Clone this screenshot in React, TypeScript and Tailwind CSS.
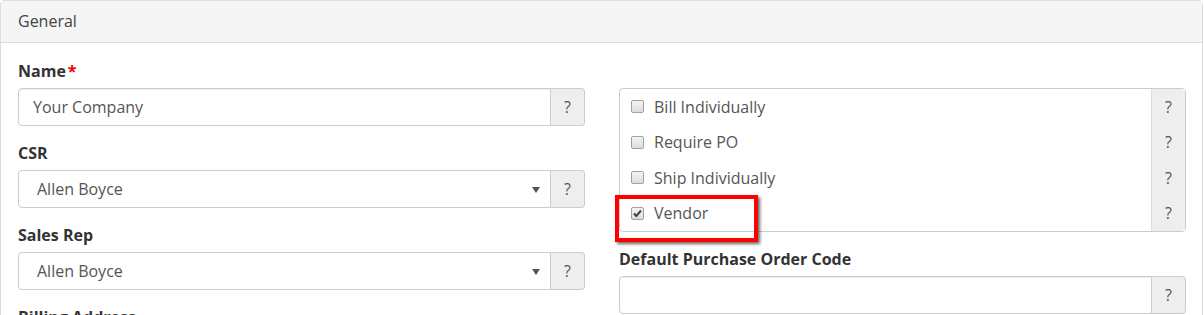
import { ReactNode } from "react";

const FONT = "font-['Open_Sans','Liberation_Sans',sans-serif]";

const HelpAddon = ({ className = "" }: { className?: string }) => (
  <span
    className={`flex w-[34px] shrink-0 items-center justify-center border border-l-0 border-[#ccc] bg-[#eee] text-[16px] text-[#555] ${className}`}
  >
    ?
  </span>
);

const Label = ({ children, required }: { children: ReactNode; required?: boolean }) => (
  <label className="mb-[6px] block pt-[2px] text-[16px] font-bold leading-[22px] text-[#333]">
    {children}
    {required && <span className="ml-[2px] text-[#e00]">*</span>}
  </label>
);

const TextField = ({ value = "" }: { value?: string }) => (
  <div className="flex h-[38px]">
    <div className="flex flex-1 items-center rounded-l-[4px] border border-[#ccc] px-[14px] text-[16px] text-[#555] shadow-[inset_0_1px_1px_rgba(0,0,0,0.075)]">
      {value}
    </div>
    <HelpAddon className="rounded-r-[4px]" />
  </div>
);

const SelectField = ({ value }: { value: string }) => (
  <div className="flex h-[38px]">
    <div className="flex flex-1 items-center justify-between rounded-l-[4px] border border-[#ccc] pl-[18px] pr-[10px] text-[16px] text-[#555]">
      <span>{value}</span>
      <svg width="8" height="6" viewBox="0 0 8 6" className="mt-[1px]">
        <path d="M0 0h8L4 6z" fill="#555" />
      </svg>
    </div>
    <HelpAddon className="rounded-r-[4px]" />
  </div>
);

const CheckBox = ({ checked }: { checked?: boolean }) => (
  <span className="relative inline-block h-[13px] w-[13px] rounded-[2px] border border-[#a0a0a0] bg-gradient-to-b from-[#f4f4f4] to-[#dcdcdc]">
    {checked && (
      <svg width="11" height="11" viewBox="0 0 11 11" className="absolute left-0 top-0">
        <path d="M2 5.5l2.3 2.5L9 2.5" fill="none" stroke="#444" strokeWidth="2" />
      </svg>
    )}
  </span>
);

const options = [
  { label: "Bill Individually", checked: false },
  { label: "Require PO", checked: false },
  { label: "Ship Individually", checked: false },
  { label: "Vendor", checked: true },
];

export default function App() {
  return (
    <div className={`h-[315px] w-[1204px] overflow-hidden bg-white ${FONT}`}>
      <div className="mr-[1px] h-[340px] rounded-t-[4px] border border-[#ddd]">
        <div className="flex h-[42px] items-center border-b border-[#ddd] bg-[#f5f5f5] px-[17px] pb-[1px] text-[16px] text-[#444]">
          General
        </div>
        <div className="grid grid-cols-2 gap-[34px] pl-[17px] pr-[16px] pt-[15px]">
          <div className="flex flex-col gap-[14px]">
            <div>
              <Label required>Name</Label>
              <TextField value="Your Company" />
            </div>
            <div>
              <Label>CSR</Label>
              <SelectField value="Allen Boyce" />
            </div>
            <div>
              <Label>Sales Rep</Label>
              <SelectField value="Allen Boyce" />
            </div>
            <div>
              <Label>Billing Address</Label>
            </div>
          </div>
          <div className="flex flex-col gap-[14px]">
            <div className="relative mt-[30px] flex rounded-[4px] border border-[#ccc]">
              <div className="flex flex-1 flex-col">
                {options.map((opt) => (
                  <div key={opt.label} className="flex h-[35.5px] items-center gap-[10px] pl-[11px] text-[16px] text-[#555]">
                    <CheckBox checked={opt.checked} />
                    <span>{opt.label}</span>
                  </div>
                ))}
              </div>
              <div className="flex w-[34px] flex-col border-l border-[#ddd] bg-[#eee]">
                {options.map((opt) => (
                  <span key={opt.label} className="flex h-[35.5px] items-center justify-center text-[16px] text-[#555]">
                    ?
                  </span>
                ))}
              </div>
              <div className="absolute left-[-5px] top-[106px] h-[47px] w-[143px] border-4 border-[#f00] shadow-[2px_2px_3px_rgba(0,0,0,0.6)]" />
            </div>
            <div>
              <Label>Default Purchase Order Code</Label>
              <TextField />
            </div>
          </div>
        </div>
      </div>
    </div>
  );
}
